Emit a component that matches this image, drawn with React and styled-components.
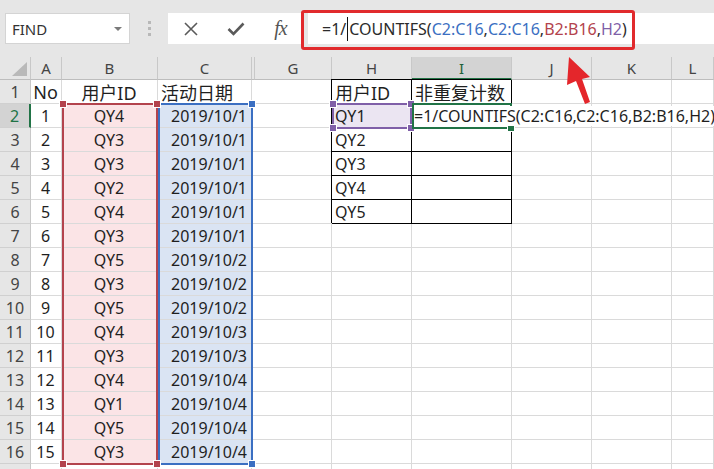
import React from 'react';
import styled, { createGlobalStyle } from 'styled-components';

const GlobalStyle = createGlobalStyle`
  html, body {
    margin: 0;
    padding: 0;
    background: #fff;
  }
  body {
    font-family: "Noto Sans", "Noto Sans CJK SC", sans-serif;
    overflow: hidden;
  }
`;

// Styled Components
const Screen = styled.div`
  position: relative;
  width: 714px;
  height: 469px;
  overflow: hidden;
  background: #fff;
`;

const Toolbar = styled.div`
  height: 57px;
  box-sizing: border-box;
  padding: 13px 0 0 5px;
  background: #e6e6e6;
  display: flex;
  align-items: flex-start;
`;

const NameBox = styled.div`
  width: 125px;
  height: 31px;
  box-sizing: border-box;
  background: #fff;
  border: 1px solid #d4d4d4;
  padding: 0 7px 0 6px;
  display: flex;
  align-items: center;
  justify-content: space-between;
  font-size: 15px;
  color: #333;
`;

const DropCaret = styled.span`
  width: 0;
  height: 0;
  border-left: 4px solid transparent;
  border-right: 4px solid transparent;
  border-top: 4px solid #7a7a7a;
`;

const Grip = styled.div`
  width: 38px;
  height: 31px;
  display: flex;
  flex-direction: column;
  align-items: center;
  justify-content: center;
  gap: 3px;

  span {
    width: 3px;
    height: 3px;
    background: #b8b8b8;
  }
`;

const FormulaBar = styled.div`
  flex: 1;
  height: 31px;
  display: flex;
  gap: 5px;
`;

const ButtonBox = styled.div`
  width: 135px;
  background: #fff;
  display: flex;
`;

const BarButton = styled.div`
  width: 45px;
  display: flex;
  align-items: center;
  justify-content: center;
  color: #5a5a5a;
`;

const Fx = styled.span`
  font-family: "Liberation Serif", serif;
  font-style: italic;
  font-size: 20px;
  color: #555;
  letter-spacing: -1px;
`;

const FormulaInput = styled.div`
  flex: 1;
  background: #fff;
  display: flex;
  align-items: center;
  padding-left: 14px;
  font-size: 16px;
  color: #2b2b2b;
  white-space: nowrap;
`;

const Caret = styled.span`
  display: inline-block;
  width: 1px;
  height: 24px;
  background: #111;
  margin: 0 1px;
`;

const Ref = styled.span`
  color: ${p => p.$color};
`;

const Callout = styled.div`
  position: absolute;
  left: 301px;
  top: 10px;
  width: 334px;
  height: 40px;
  box-sizing: border-box;
  border: 3px solid #e12a2d;
  border-radius: 3px;
  pointer-events: none;
`;

const Arrow = styled.svg`
  position: absolute;
  left: 560px;
  top: 52px;
  z-index: 5;
`;

const Sheet = styled.div`
  display: grid;
  grid-template-columns: 31px 31px 96px 94px 3px 77px 80px 100px 80px 80px 1fr;
  grid-template-rows: 23px repeat(17, 24px);
  font-size: 16px;
  color: #1f1f1f;
`;

const Corner = styled.div`
  grid-row: 1;
  grid-column: 1;
  background: #e6e6e6;
  border-right: 1px solid #c8c8c8;
  border-bottom: 1px solid #bdbdbd;
  position: relative;

  &::after {
    content: '';
    position: absolute;
    right: 3px;
    bottom: 3px;
    border-left: 15px solid transparent;
    border-bottom: 14px solid #b9b9b9;
  }
`;

const ColHead = styled.div`
  grid-row: 1;
  grid-column: ${p => p.$c};
  box-sizing: border-box;
  background: ${p => (p.$active ? '#d3d3d3' : '#e6e6e6')};
  border-right: 1px solid #c8c8c8;
  border-bottom: ${p => (p.$active ? '2px solid #217346' : '1px solid #bdbdbd')};
  color: ${p => (p.$active ? '#1d5f3a' : '#444')};
  font-size: 15px;
  display: flex;
  align-items: center;
  justify-content: center;
  padding-top: ${p => (p.$active ? '1px' : '0')};
`;

const RowHead = styled.div`
  grid-row: ${p => p.$r};
  grid-column: 1;
  box-sizing: border-box;
  background: ${p => (p.$active ? '#d3d3d3' : '#e6e6e6')};
  border-right: ${p => (p.$active ? '2px solid #217346' : '1px solid #c8c8c8')};
  border-bottom: 1px solid #d0d0d0;
  color: ${p => (p.$active ? '#217346' : '#444')};
  display: flex;
  align-items: center;
  justify-content: center;
`;

const Cell = styled.div`
  grid-row: ${p => p.$r};
  grid-column: ${p => p.$c};
  box-sizing: border-box;
  min-width: 0;
  background: ${p => p.$fill || '#fff'};
  border-right: 1px solid ${p => (p.$boxed ? '#000' : p.$noRight ? 'transparent' : '#dadada')};
  border-bottom: 1px solid ${p => (p.$boxed ? '#000' : '#dadada')};
  box-shadow: ${p => (p.$boxed ? '-1px -1px 0 #000' : 'none')};
  display: flex;
  align-items: center;
  justify-content: ${p => p.$align || 'flex-start'};
  padding: 0 4px 0 3px;
  font-size: ${p => (p.$big ? '18px' : '16px')};
  white-space: nowrap;
`;

const Spill = styled.span`
  position: relative;
  z-index: 3;
  background: #fff;
  line-height: 20px;
  margin-left: -1px;
`;

const Range = styled.div`
  grid-row: ${p => p.$r1} / ${p => p.$r2 + 1};
  grid-column: ${p => p.$c};
  position: relative;
  z-index: 2;
  pointer-events: none;
  border: 2px solid ${p => p.$color};
  margin: -1px ${p => (p.$wide ? '-1px' : '0')} -1px 0;
`;

const Handle = styled.span`
  position: absolute;
  width: 6px;
  height: 6px;
  background: ${p => p.$color};
  border: 1px solid #fff;
  ${p => (p.$pos.includes('t') ? 'top: -5px;' : 'bottom: -5px;')}
  ${p => (p.$pos.includes('l') ? 'left: -5px;' : 'right: -5px;')}
`;

const columns = [
  { c: 2, label: 'A' },
  { c: 3, label: 'B' },
  { c: 4, label: 'C' },
  { c: 5, label: '' },
  { c: 6, label: 'G' },
  { c: 7, label: 'H' },
  { c: 8, label: 'I', active: true },
  { c: 9, label: 'J' },
  { c: 10, label: 'K' },
  { c: 11, label: 'L' },
];

const users = ['QY4', 'QY3', 'QY3', 'QY2', 'QY4', 'QY3', 'QY5', 'QY3', 'QY5', 'QY4', 'QY3', 'QY4', 'QY1', 'QY5', 'QY3'];
const dates = [1, 1, 1, 1, 1, 1, 2, 2, 2, 3, 3, 4, 4, 4, 4].map(d => `2019/10/${d}`);
const lookup = ['QY1', 'QY2', 'QY3', 'QY4', 'QY5'];

const BLUE = '#3b6fc2';
const RED = '#b3434d';
const PURPLE = '#7f5fa8';
const GREEN = '#217346';

const Handles = ({ color, corners }) =>
  corners.map(pos => <Handle key={pos} $pos={pos} $color={color} />);

const App = () => {
  const cells = [];

  for (let row = 1; row <= 17; row++) {
    const r = row + 1;
    // row 17 only peeks in at the bottom edge, its number is out of view
    cells.push(<RowHead key={`rh${row}`} $r={r} $active={row === 2}>{row < 17 ? row : ''}</RowHead>);

    const i = row - 2;
    const inData = row >= 2 && row <= 16;
    const inTable = row <= 6;

    let a = '', b = '', c = '', h = '', iv = null;
    if (row === 1) {
      a = 'No';
      b = '用户ID';
      c = '活动日期';
      h = '用户ID';
      iv = '非重复计数';
    } else if (inData) {
      a = i + 1;
      b = users[i];
      c = dates[i];
    }
    if (row >= 2 && row <= 6) h = lookup[row - 2];

    cells.push(
      <Cell key={`a${row}`} $r={r} $c={2} $align="center" $big={row === 1}>{a}</Cell>,
      <Cell key={`b${row}`} $r={r} $c={3} $align="center" $big={row === 1} $fill={inData ? '#fbe4e6' : null}>{b}</Cell>,
      <Cell key={`c${row}`} $r={r} $c={4} $align={row === 1 ? 'flex-start' : 'flex-end'} $big={row === 1} $fill={inData ? '#dae4f3' : null}>{c}</Cell>,
      <Cell key={`x${row}`} $r={r} $c={5} $noRight />,
      <Cell key={`g${row}`} $r={r} $c={6} />,
      <Cell key={`h${row}`} $r={r} $c={7} $boxed={inTable} $big={row === 1} $fill={row === 2 ? '#ebe5f2' : null}>{h}</Cell>,
      <Cell key={`i${row}`} $r={r} $c={8} $boxed={inTable} $big={row === 1}>
        {row === 2 ? <Spill>=1/COUNTIFS(C2:C16,C2:C16,B2:B16,H2)</Spill> : iv}
      </Cell>,
      <Cell key={`j${row}`} $r={r} $c={9} />,
      <Cell key={`k${row}`} $r={r} $c={10} />,
      <Cell key={`l${row}`} $r={r} $c={11} />
    );
  }

  return (
    <Screen>
      <GlobalStyle />
      <Toolbar>
        <NameBox>
          FIND
          <DropCaret />
        </NameBox>
        <Grip>
          <span />
          <span />
          <span />
        </Grip>
        <FormulaBar>
          <ButtonBox>
            <BarButton>
              <svg width="16" height="16" viewBox="0 0 16 16">
                <path d="M2 2 L14 14 M14 2 L2 14" stroke="#5a5a5a" strokeWidth="1.6" fill="none" />
              </svg>
            </BarButton>
            <BarButton>
              <svg width="18" height="14" viewBox="0 0 18 14">
                <path d="M1.5 7 L6.5 12 L16.5 1.5" stroke="#5a5a5a" strokeWidth="2.6" fill="none" />
              </svg>
            </BarButton>
            <BarButton>
              <Fx>fx</Fx>
            </BarButton>
          </ButtonBox>
          <FormulaInput>
            =1/<Caret />COUNTIFS(<Ref $color={BLUE}>C2:C16</Ref>,<Ref $color={BLUE}>C2:C16</Ref>,
            <Ref $color={RED}>B2:B16</Ref>,<Ref $color={PURPLE}>H2</Ref>)
          </FormulaInput>
        </FormulaBar>
      </Toolbar>

      <Sheet>
        <Corner />
        {columns.map(col => (
          <ColHead key={col.c} $c={col.c} $active={col.active}>{col.label}</ColHead>
        ))}
        {cells}

        <Range $r1={3} $r2={17} $c={4} $color={BLUE} $wide>
          <Handles color={BLUE} corners={['tr', 'br']} />
        </Range>
        <Range $r1={3} $r2={17} $c={3} $color={RED}>
          <Handles color={RED} corners={['tl', 'tr', 'bl', 'br']} />
        </Range>
        <Range $r1={3} $r2={3} $c={7} $color={PURPLE}>
          <Handles color={PURPLE} corners={['tl', 'tr', 'bl', 'br']} />
        </Range>
        <Range $r1={3} $r2={3} $c={8} $color={GREEN}>
          <Handles color={GREEN} corners={['br']} />
        </Range>
      </Sheet>

      <Callout />
      <Arrow width="40" height="56" viewBox="0 0 40 56">
        <polygon
          points="9,5 30,25 22,27 30,50 25,52 16,29 7,33"
          fill="#e4262b"
        />
      </Arrow>
    </Screen>
  );
};

export default App;
